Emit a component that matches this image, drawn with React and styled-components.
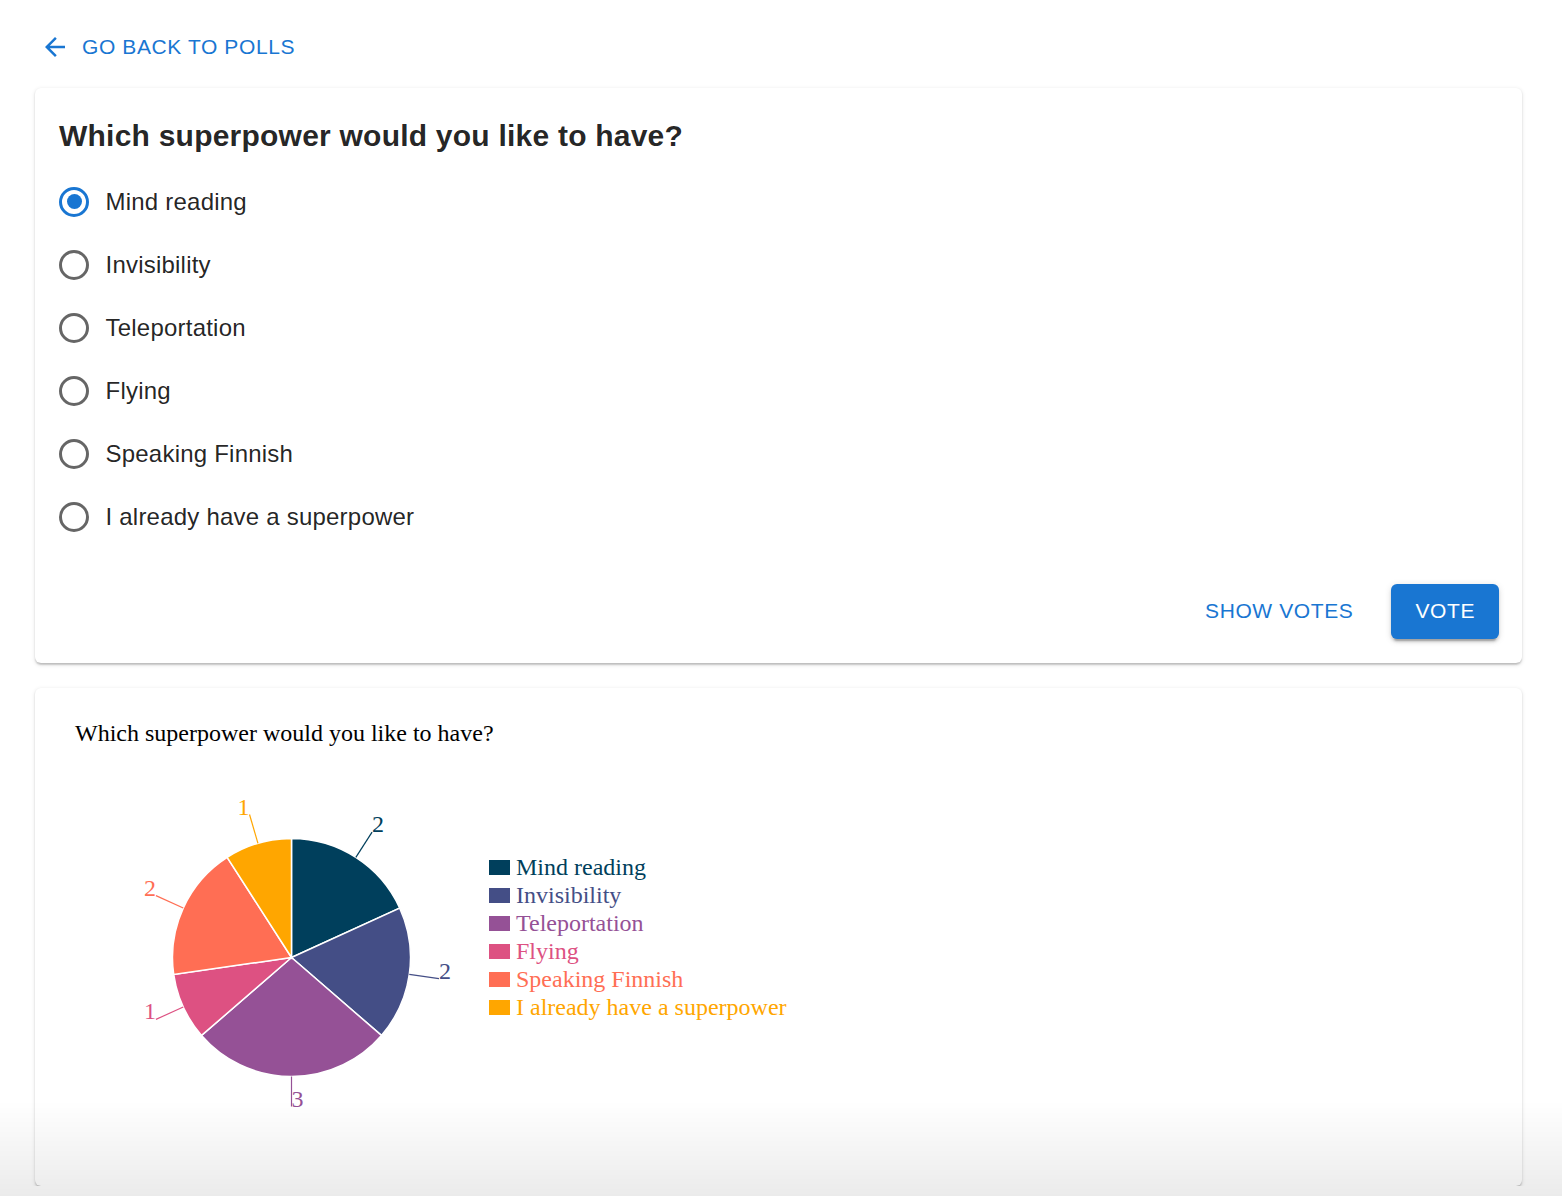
import React, { useState } from 'react';
import styled, { createGlobalStyle } from 'styled-components';

const options = [
  { label: 'Mind reading', votes: 2, color: '#003f5c' },
  { label: 'Invisibility', votes: 2, color: '#444e86' },
  { label: 'Teleportation', votes: 3, color: '#955196' },
  { label: 'Flying', votes: 1, color: '#dd5182' },
  { label: 'Speaking Finnish', votes: 2, color: '#ff6e54' },
  { label: 'I already have a superpower', votes: 1, color: '#ffa600' },
];

const question = 'Which superpower would you like to have?';

function PollChart() {
  const cx = 232.5;
  const cy = 245.5;
  const r = 119;
  const total = options.reduce((s, o) => s + o.votes, 0);
  const point = (a, rad) => [cx + rad * Math.sin(a), cy - rad * Math.cos(a)];

  let angle = 0;
  const slices = options.map((o) => {
    const start = angle;
    const end = angle + (o.votes / total) * Math.PI * 2;
    angle = end;
    const [x0, y0] = point(start, r);
    const [x1, y1] = point(end, r);
    const large = end - start > Math.PI ? 1 : 0;
    const mid = (start + end) / 2;
    const [lx0, ly0] = point(mid, r);
    const [lx1, ly1] = point(mid, r + 30);
    return {
      ...o,
      d: `M${cx} ${cy} L${x0} ${y0} A${r} ${r} 0 ${large} 1 ${x1} ${y1} Z`,
      line: [lx0, ly0, lx1, ly1],
      anchor: Math.sin(mid) > -0.001 ? 'start' : 'end',
    };
  });

  return (
    <ChartSvg width="760" height="450" viewBox="0 0 760 450">
      <text x="16" y="29" fontSize="24" fill="#000">{question}</text>
      {slices.map((s) => (
        <path key={s.label} d={s.d} fill={s.color} stroke="#fff" strokeWidth="1.5" />
      ))}
      {slices.map((s) => (
        <g key={s.label + '-label'}>
          <line x1={s.line[0]} y1={s.line[1]} x2={s.line[2]} y2={s.line[3]} stroke={s.color} strokeWidth="1.2" />
          <text x={s.line[2]} y={s.line[3]} textAnchor={s.anchor} fontSize="24" fill={s.color}>
            {s.votes}
          </text>
        </g>
      ))}
      {options.map((o, i) => (
        <g key={o.label + '-legend'}>
          <rect x="430" y={148 + i * 28} width="21" height="15" fill={o.color} />
          <text x="457" y={163 + i * 28} fontSize="24" fill={o.color}>{o.label}</text>
        </g>
      ))}
    </ChartSvg>
  );
}

export default function App() {
  const [selected, setSelected] = useState(0);

  return (
    <>
      <GlobalStyle />
      <Page>
        <BackButton>
          <BackIcon viewBox="0 0 24 24">
            <path d="M20 11H7.83l5.59-5.59L12 4l-8 8 8 8 1.41-1.41L7.83 13H20v-2z" fill="currentColor" />
          </BackIcon>
          Go back to polls
        </BackButton>

        <Card>
          <Title>{question}</Title>
          <RadioList>
            {options.map((o, i) => (
              <RadioRow key={o.label} onClick={() => setSelected(i)}>
                <RadioHit>
                  <RadioCircle $checked={selected === i} />
                </RadioHit>
                <RadioLabel>{o.label}</RadioLabel>
              </RadioRow>
            ))}
          </RadioList>
          <Actions>
            <TextButton>Show votes</TextButton>
            <VoteButton>Vote</VoteButton>
          </Actions>
        </Card>

        <ChartCard>
          <PollChart />
        </ChartCard>
      </Page>
      <BottomFade />
    </>
  );
}

const GlobalStyle = createGlobalStyle`
  html, body {
    margin: 0;
    background: #fff;
    font-family: "Liberation Sans", Arial, Helvetica, sans-serif;
    color: rgba(0, 0, 0, 0.87);
  }
`;

const Page = styled.div`
  padding: 20px 40px 0 35px;
  display: flex;
  flex-direction: column;
  align-items: stretch;
`;

const BackButton = styled.button`
  align-self: flex-start;
  display: inline-flex;
  align-items: center;
  margin: 0 0 13px -1px;
  padding: 9px 12px;
  border: none;
  background: transparent;
  color: #1976d2;
  font-family: "Liberation Sans", Arial, sans-serif;
  font-size: 21px;
  font-weight: 500;
  letter-spacing: 0.6px;
  line-height: 36.75px;
  text-transform: uppercase;
  cursor: pointer;
`;

const BackIcon = styled.svg`
  width: 30px;
  height: 30px;
  margin: 0 12px 0 -6px;
`;

const Card = styled.div`
  background: #fff;
  border-radius: 6px;
  box-shadow: 0px 3px 1.5px -3px rgba(0, 0, 0, 0.2), 0px 1.5px 1.5px 0px rgba(0, 0, 0, 0.14),
    0px 1.5px 4.5px 0px rgba(0, 0, 0, 0.12);
  padding: 24px 23px 24px 24px;
`;

const ChartCard = styled(Card)`
  margin-top: 25px;
  height: 450px;
`;

const Title = styled.h2`
  margin: 0 0 10.5px;
  font-size: 30px;
  font-weight: 700;
  line-height: 48px;
  letter-spacing: 0.225px;
  color: rgba(0, 0, 0, 0.87);
`;

const RadioList = styled.div`
  display: flex;
  flex-direction: column;
`;

const RadioRow = styled.label`
  display: flex;
  align-items: center;
  height: 63px;
  margin-left: -16.5px;
  cursor: pointer;
`;

const RadioHit = styled.span`
  width: 63px;
  height: 63px;
  display: flex;
  align-items: center;
  justify-content: center;
`;

const RadioCircle = styled.span`
  position: relative;
  width: 30px;
  height: 30px;
  box-sizing: border-box;
  border-radius: 50%;
  border: 3px solid ${({ $checked }) => ($checked ? '#1976d2' : 'rgba(0, 0, 0, 0.6)')};

  &::after {
    content: '';
    position: absolute;
    left: 4.5px;
    top: 4.5px;
    width: 15px;
    height: 15px;
    border-radius: 50%;
    background: #1976d2;
    transform: scale(${({ $checked }) => ($checked ? 1 : 0)});
  }
`;

const RadioLabel = styled.span`
  font-size: 24px;
  line-height: 36px;
  letter-spacing: 0.22px;
`;

const Actions = styled.div`
  display: flex;
  justify-content: flex-end;
  align-items: center;
  gap: 26px;
  margin-top: 35.5px;
`;

const TextButton = styled.button`
  padding: 9px 12px;
  border: none;
  border-radius: 6px;
  background: transparent;
  color: #1976d2;
  font-family: "Liberation Sans", Arial, sans-serif;
  font-size: 21px;
  font-weight: 500;
  letter-spacing: 0.6px;
  line-height: 36.75px;
  text-transform: uppercase;
  cursor: pointer;
`;

const VoteButton = styled(TextButton)`
  padding: 9px 24px;
  background: #1976d2;
  color: #fff;
  box-shadow: 0px 4.5px 1.5px -3px rgba(0, 0, 0, 0.2), 0px 3px 3px 0px rgba(0, 0, 0, 0.14),
    0px 1.5px 7.5px 0px rgba(0, 0, 0, 0.12);
`;

const ChartSvg = styled.svg`
  display: block;
  font-family: "Liberation Serif", "Times New Roman", serif;
`;

const BottomFade = styled.div`
  position: fixed;
  left: 0;
  right: 0;
  bottom: 0;
  height: 95px;
  pointer-events: none;
  background: linear-gradient(to bottom, rgba(0, 0, 0, 0), rgba(0, 0, 0, 0.08));
`;
